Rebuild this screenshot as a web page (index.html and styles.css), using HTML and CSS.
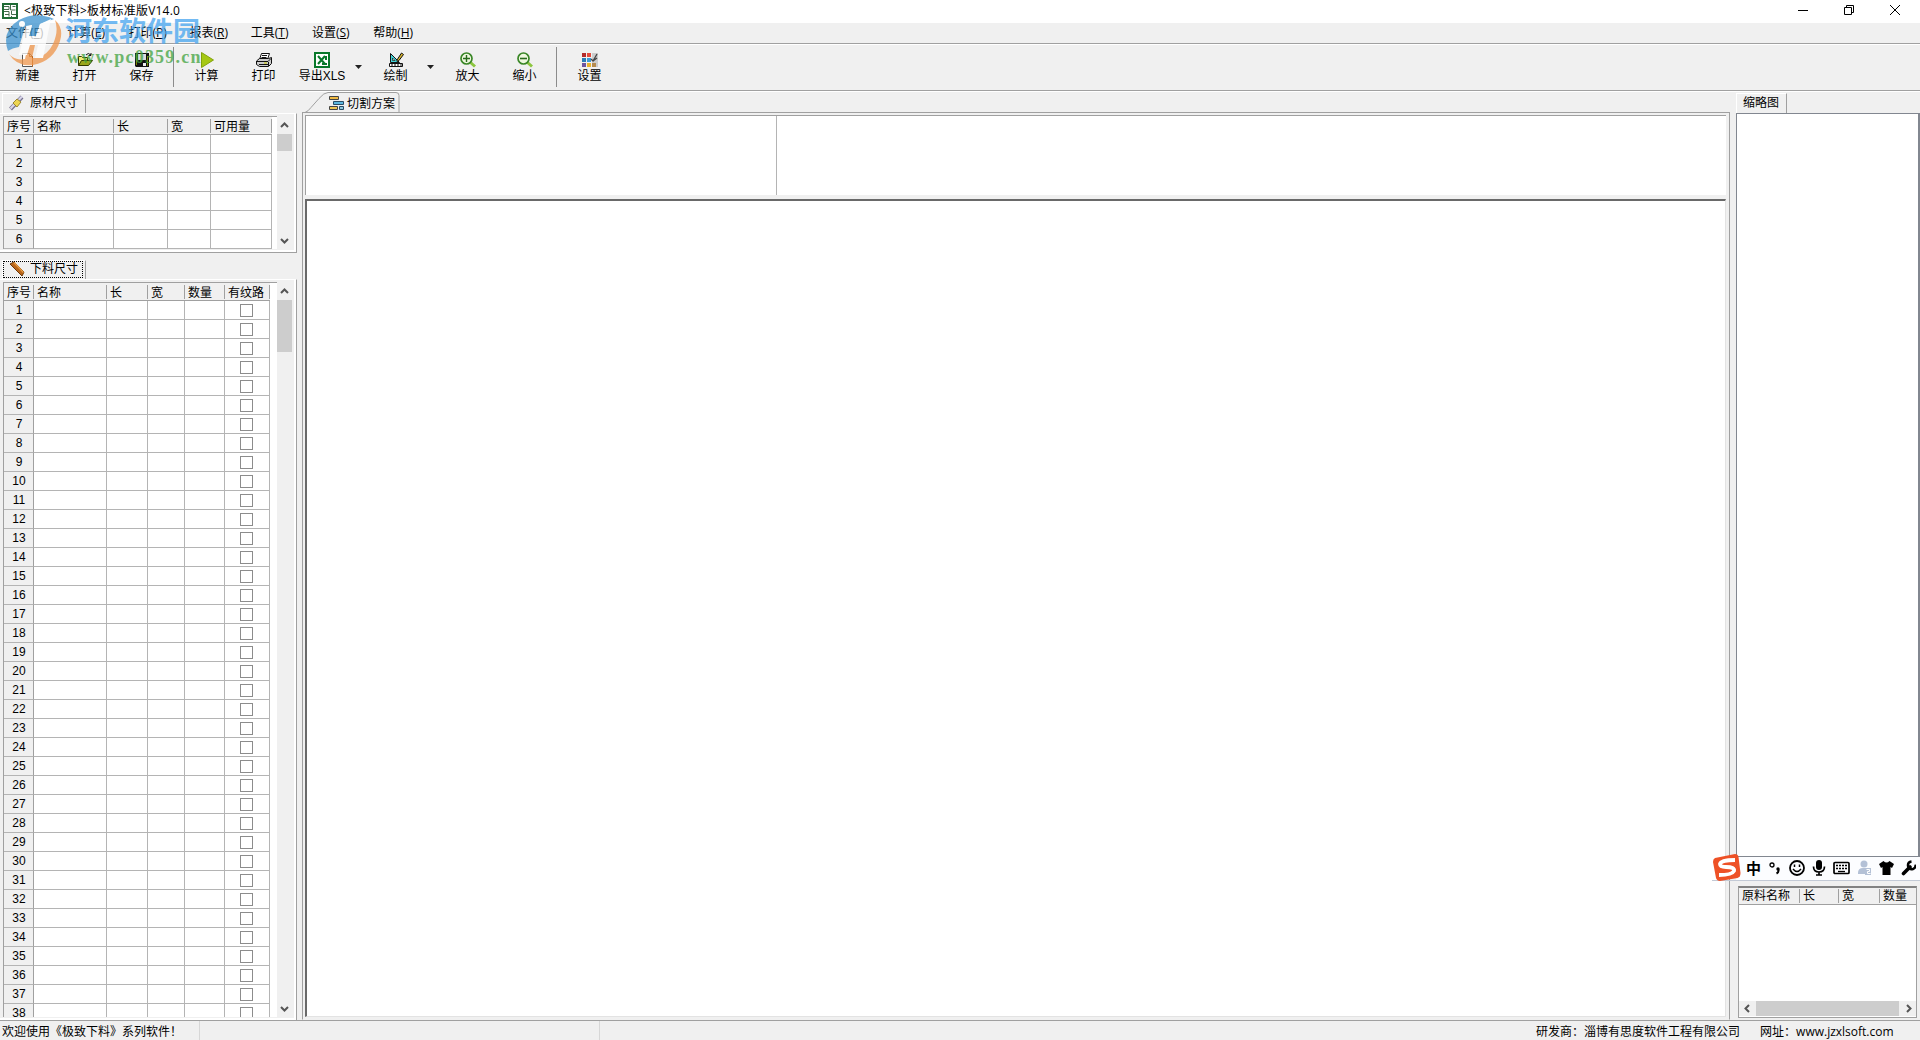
FILE: index.html
```html
<!DOCTYPE html>
<html lang="zh-CN">
<head>
    <meta charset="UTF-8">
    <title>&lt;极致下料&gt;板材标准版V14.0</title>
    <link rel="stylesheet" href="styles.css">
</head>
<body>
    <header class="titlebar">
        <svg class="app-icon" width="16" height="16" viewBox="0 0 16 16"><path fill="#fff" stroke="#1f6b35" stroke-width="2" d="M1 1h14v14H1z"/><path fill="none" stroke="#456b4c" d="M2 3.500h5v3H2M8.500 2v5h5M10.500 3.500h3M2 8.500h5v5M9.500 8v3.500H14M9.500 13v1M3 11.500h4"/></svg>
        <span class="title">&lt;极致下料&gt;板材标准版V14.0</span>
        <div class="window-buttons">
            <svg width="10" height="10"><path d="M0 5.500h10" stroke="#000"/></svg>
            <svg width="10" height="10" fill="none" stroke="#000"><path d="M.5 2.500h7v7h-7zM2.500 2.500v-2h7v7h-2"/></svg>
            <svg width="10" height="10" stroke="#000"><path d="M0 0l10 10M10 0L0 10"/></svg>
        </div>
    </header>

    <nav class="menubar">
        <span>文件(<u>F</u>)</span>
        <span>计算(<u>E</u>)</span>
        <span>打印(<u>P</u>)</span>
        <span>报表(<u>R</u>)</span>
        <span>工具(<u>T</u>)</span>
        <span>设置(<u>S</u>)</span>
        <span>帮助(<u>H</u>)</span>
    </nav>

    <div class="toolbar">
        <div class="tool">
            <svg width="16" height="16"><path d="M2.500 1.500h7l3 3v10h-10z" fill="#fff" stroke="#555"/><path d="M9.500 1.500v3h3v10" fill="none" stroke="#b55f18"/></svg>
            新建
        </div>
        <div class="tool">
            <svg width="16" height="16"><path d="M1.500 13.500v-9h3l1 1h5v3" fill="#f3ec77" stroke="#333a00"/><path d="M1.500 13.500l3-5h11l-4 5z" fill="#9aa51b" stroke="#333a00"/><path d="M9 3q2-3 5 0m0-2v2.500h-2.500" fill="none" stroke="#111"/></svg>
            打开
        </div>
        <div class="tool">
            <svg width="16" height="16"><path d="M1 1h14v14H2l-1-1z" fill="#111"/><path d="M4 2h8v6H4z" fill="#ddd"/><path d="M2 2h1v11H2zM13 4h1v10h-1z" fill="#798500"/><path d="M9 11h3v3H9z" fill="#eee"/></svg>
            保存
        </div>
        <i class="separator"></i>
        <div class="tool">
            <svg width="16" height="16"><path d="M2.500 .5l12 7.500-12 7.500z" fill="#a6c814" stroke="#82a30c"/></svg>
            计算
        </div>
        <div class="tool">
            <svg width="16" height="16"><path d="M5.500 1.500h8l-2 6h-8z" fill="#fff" stroke="#111"/><path d="M6 3.500h5M5.500 5.500h5" stroke="#111"/><path d="M.5 9l3-2.500h9l3-1v6l-3 3h-9l-3-2z" fill="#ccc" stroke="#111"/><path d="M1 9.500h11l3-3M3 12.500h9M12.500 10v4" fill="none" stroke="#111"/><path d="M8 11h3" stroke="#c7c600"/></svg>
            打印
        </div>
        <div class="tool tool-xls">
            <svg width="16" height="16"><path d="M1 1h14v14H1z" fill="#fff" stroke="#08782a" stroke-width="2"/><path d="M4 4l7 8M11 4l-7 8M12 4v4M8 12h5" stroke="#08782a" stroke-width="2"/></svg>
            导出XLS
        </div>
        <i class="dropdown"></i>
        <div class="tool">
            <svg width="16" height="16"><path d="M2.500 1.500v9h9z" fill="#42d4d8" stroke="#111"/><path d="M4.500 6v2.500h2.500z" fill="#fff" stroke="#111" stroke-width=".7"/><path d="M1.500 11.500h13v3h-13z" fill="#fff" stroke="#111"/><path d="M4 12v2M7 12v2M10 12v2M13 12v2" stroke="#111"/><path d="M9 8l4.500-7 2 1.500-4.500 6-2 1z" fill="#d8b52c" stroke="#111"/></svg>
            绘制
        </div>
        <i class="dropdown"></i>
        <div class="tool">
            <svg width="16" height="16"><path d="M10.500 10.500l4.500 4" stroke="#8cc63f" stroke-width="3"/><circle cx="6.500" cy="6.500" r="5.500" fill="#eef8df" stroke="#398626" stroke-width="1.700"/><path d="M3 6.500h7M6.500 3v7" stroke="#286b1b" stroke-width="1.400"/></svg>
            放大
        </div>
        <div class="tool">
            <svg width="16" height="16"><path d="M10.500 10.500l4.500 4" stroke="#8cc63f" stroke-width="3"/><circle cx="6.500" cy="6.500" r="5.500" fill="#eef8df" stroke="#398626" stroke-width="1.700"/><path d="M3 6.500h7" stroke="#286b1b" stroke-width="1.600"/></svg>
            缩小
        </div>
        <i class="separator"></i>
        <div class="tool">
            <svg width="16" height="16"><path d="M10 1h6v14h-6z" fill="#ccc"/><path d="M0 1h4v4H0z" fill="#b42b2b"/><path d="M5 1h4v4H5z" fill="#e44b3c"/><path d="M0 6h4v4H0z" fill="#2a7cb8"/><path d="M5 6h4v4H5z" fill="#3c9bd8"/><path d="M0 11h4v4H0z" fill="#6c55a0"/><path d="M5 11h4v4H5z" fill="#e9b32e"/><path d="M10 11h4v4h-4z" fill="#b58b4f"/><path d="M9 7l2 2 4-7M11 9l4-3" fill="none" stroke="#444" stroke-width="1.300"/></svg>
            设置
        </div>
    </div>

    <main class="workspace">
        <aside class="left">
            <div class="tab">
                <svg width="16" height="16"><path d="M1.500 14L13 2" stroke="#77728f" stroke-width="4"/><path d="M1.500 13.500L13 1.500" stroke="#d8d5ea" stroke-width="2.200"/><path d="M4 8l4-4 4 3-4 5z" fill="#edd553" stroke="#8a751b" stroke-width=".8"/></svg>
                <span>原材尺寸</span>
            </div>
            <section class="panel panel-stock">
                <div class="grid-area">
                    <table class="grid">
                        <colgroup><col style="width:30px"><col style="width:80px"><col style="width:54px"><col style="width:43px"><col style="width:61px"></colgroup>
                        <thead><tr><th>序号</th><th>名称</th><th>长</th><th>宽</th><th>可用量</th></tr></thead>
                        <tbody id="stockRows"></tbody>
                    </table>
                </div>
                <div class="scrollbar">
                    <svg width="15" height="17"><path d="M4 11l3.500-3.500L11 11" /></svg>
                    <i class="thumb"></i>
                    <svg class="down" width="15" height="17"><path d="M4 7l3.500 3.500L11 7" /></svg>
                </div>
            </section>
            <div class="tab tab-focus">
                <svg width="16" height="16"><path d="M1 3l4-2 10 10-2 4z" fill="#b9651a" stroke="#6d3908"/><path d="M5 1.500l9.500 10" stroke="#e89b42" stroke-width="1.500"/></svg>
                <span>下料尺寸</span>
            </div>
            <section class="panel panel-parts">
                <div class="grid-area">
                    <table class="grid">
                        <colgroup><col style="width:30px"><col style="width:73px"><col style="width:41px"><col style="width:37px"><col style="width:40px"><col style="width:45px"></colgroup>
                        <thead><tr><th>序号</th><th>名称</th><th>长</th><th>宽</th><th>数量</th><th>有纹路</th></tr></thead>
                        <tbody id="partRows"></tbody>
                    </table>
                </div>
                <div class="scrollbar">
                    <svg width="15" height="17"><path d="M4 11l3.500-3.500L11 11" /></svg>
                    <i class="thumb"></i>
                    <svg class="down" width="15" height="17"><path d="M4 7l3.500 3.500L11 7" /></svg>
                </div>
            </section>
        </aside>

        <section class="center">
            <div class="plan-tab">
                <svg class="plan-shape" width="100" height="21"><path d="M0 20.500h3q3-1 6-5l8-9q5-6 9-6h68q3 0 3 3v17" fill="none" stroke="#a0a0a0"/></svg>
                <svg width="15" height="15"><path d="M.5.500h9v3h-9z" fill="#f0b942" stroke="#444"/><path d="M4.500 5.500h10v3h-10z" fill="#5cb7df" stroke="#294c65"/><path d="M.5 10.500h8v3h-8z" fill="#f0c653" stroke="#444"/><path d="M10.500 10.500h4v3h-4z" fill="#8ec8de" stroke="#294c65"/></svg>
                <span>切割方案</span>
            </div>
            <div class="plan-frame">
                <div class="plan-info"><div class="info-left"></div><div class="info-right"></div></div>
                <div class="canvas"></div>
            </div>
        </section>

        <aside class="right">
            <div class="tab thumb-tab"><span>缩略图</span></div>
            <div class="thumbnail"></div>
            <div class="material">
                <div class="material-head"><span>原料名称</span><span>长</span><span>宽</span><span>数量</span></div>
                <div class="material-body"></div>
                <div class="h-scrollbar">
                    <svg width="17" height="15"><path d="M10 4L6.500 7.500 10 11"/></svg>
                    <i></i>
                    <svg width="17" height="15"><path d="M8 4l3.500 3.500L8 11"/></svg>
                </div>
            </div>
        </aside>
    </main>

    <footer class="statusbar">
        <span class="welcome">欢迎使用《极致下料》系列软件<span class="mark">！</span></span>
        <span class="blank"></span>
        <span class="vendor">研发商<span class="mark">：</span>淄博有思度软件工程有限公司</span>
        <span class="site">网址<span class="mark">：</span>www.jzxlsoft.com</span>
    </footer>

    <!-- input method bar floating over the right column -->
    <div class="ime">
        <svg class="ime-logo" width="30" height="30" viewBox="0 0 30 30"><path d="M3 5l20-4q3 0 3.500 3l2 16q0 4-3 5L8 28q-3 0-4-3L1 9q0-3 2-4z" fill="#ee5126"/><path d="M23 7Q9 7 8 11q0 3 6 3 9 0 8 4-2 4-15 4" fill="none" stroke="#fff" stroke-width="3.800"/></svg>
        <span class="ime-lang">中</span>
        <svg width="14" height="16"><circle cx="4" cy="5" r="2" fill="none" stroke="#000" stroke-width="1.300"/><path d="M10.500 9.500v1q0 2-2 3" fill="none" stroke="#000" stroke-width="2"/><circle cx="10" cy="9" r="1.700"/></svg>
        <svg width="16" height="16"><circle cx="8" cy="8" r="7" fill="none" stroke="#000" stroke-width="1.800"/><path d="M5.500 4.500v2.500M10.500 4.500v2.500" stroke="#000" stroke-width="1.500"/><path d="M4 9q4 5 8 0" fill="none" stroke="#000" stroke-width="1.400"/></svg>
        <svg width="14" height="16"><rect x="4" y="0" width="6" height="10" rx="3"/><path d="M1.500 6.500q0 5.500 5.500 5.500t5.500-5.500M7 12v3M4 15h6" fill="none" stroke="#000" stroke-width="1.700"/></svg>
        <svg width="17" height="16"><rect x="1" y="2.500" width="15" height="11" rx="1" fill="none" stroke="#000" stroke-width="1.700"/><path d="M3 5.500h11M3 8.500h11" stroke="#000" stroke-width="1.600" stroke-dasharray="2 1"/><path d="M5 11.500h7" stroke="#000" stroke-width="1.300"/></svg>
        <svg width="15" height="16"><g fill="#b4c1d6"><circle cx="7" cy="4" r="3.500"/><path d="M1 13q0-5 5-5h3l-1 6H1z"/><path d="M8 8h6v7H8z"/></g><path d="M9.500 9.500h3v2h-2v2h3" fill="none" stroke="#fff"/></svg>
        <svg width="15" height="16"><path d="M4.500 1q3 3 6 0L15 4l-2 4-1.500-1v8h-8V7L2 8 0 4z"/></svg>
        <svg width="15" height="16"><path d="M2.500 13.500L9 7" stroke="#000" stroke-width="3.600" stroke-linecap="round"/><path d="M10.500 1.500Q6.500 2 7 6t5 3q3-1 2.500-4.500" fill="none" stroke="#000" stroke-width="2.400"/></svg>
    </div>

    <div class="watermark">
        <svg width="58" height="52" viewBox="0 0 58 52"><path d="M3 37Q-4 17 14 6 30-3 49 5l-8 3-6 2-4 12h-7l3-11-7 2-6 20q-7 1-11 4z" fill="#3b92cf"/><path d="M50 6q9 8 5 21-6 20-27 24Q12 53 4 40q6 7 16 5l3-14h7l-3 13h6q10-4 15-14 6-13 2-24z" fill="#ee954a"/><circle cx="17" cy="10" r="3" fill="#fff"/><path d="M21 12l6-1-3 11h7l4-12 11-5-8 39h-8l3-13h-8l-3 10h-8z" fill="#fff"/></svg>
        <div>
            <div class="wm-name">河东软件园</div>
            <div class="wm-url">www.pc0359.cn</div>
        </div>
    </div>

    <script>
        function fillRows(id, count, blanks, withCheck) {
            let html = '';
            for (let i = 1; i <= count; i++) {
                html += '<tr><td>' + i + '</td>' + '<td></td>'.repeat(blanks);
                if (withCheck) html += '<td><i class="check"></i></td>';
                html += '</tr>';
            }
            document.getElementById(id).innerHTML = html;
        }

        fillRows('stockRows', 6, 4, false);
        fillRows('partRows', 38, 4, true);
    </script>
</body>
</html>
```
FILE: styles.css
```css
* {
    box-sizing: border-box;
}

body {
    display: flex;
    flex-direction: column;
    width: 1920px;
    height: 1040px;
    margin: 0;
    overflow: hidden;
    position: relative;
    background: #f0f0f0;
    color: #000;
    font: 12px/16px "Liberation Sans", "Noto Sans CJK SC", sans-serif;
    white-space: nowrap;
}

svg {
    display: block;
    flex: none;
}

/* title and menu */
.titlebar {
    display: flex;
    height: 23px;
    padding: 3px 20px 0 2px;
    background: #fff;
}

.title {
    margin: 0 0 0 6px;
    font-family: "Open Sans", "Noto Sans CJK SC", sans-serif;
    letter-spacing: .22px;
}

.window-buttons {
    display: flex;
    gap: 36px;
    margin-left: auto;
    padding-top: 2px;
}

.menubar {
    display: flex;
    height: 22px;
    padding: 2px 0 0 6px;
    border-bottom: 1px solid #fff;
    box-shadow: inset 0 -1px #a0a0a0;
    font-family: "Open Sans", "Noto Sans CJK SC", sans-serif;
}

.menubar span {
    width: 61.2px;
}

/* toolbar */
.toolbar {
    display: flex;
    height: 47px;
    border-bottom: 1px solid #fff;
    box-shadow: inset 0 -1px #a0a0a0;
}

.tool {
    display: flex;
    flex-direction: column;
    align-items: center;
    width: 57px;
    padding-top: 7px;
}

.tool:first-child {
    margin-left: -1px;
}

.tool-xls {
    width: 60px;
}

.separator {
    width: 1px;
    height: 40px;
    margin: 2px 4px 0 3px;
    background: #8c8c8c;
}

.dropdown {
    width: 15px;
    padding: 20px 0 0 3px;
}

.dropdown::before {
    content: "";
    display: block;
    width: 7px;
    height: 4px;
    background: #222;
    clip-path: polygon(0 0, 100% 0, 50% 100%);
}

/* columns */
.workspace {
    display: flex;
    height: 928px;
}

.left {
    width: 297px;
}

.tab {
    display: flex;
    gap: 5px;
    width: 84px;
    height: 20px;
    margin: 1px 0 0 2px;
    padding: 1px 0 0 6px;
    border-top: 1px solid #fff;
    border-left: 1px solid #fff;
    border-right: 1px solid #a0a0a0;
}

.panel {
    display: flex;
    justify-content: space-between;
    padding: 2px 4px 0 3px;
    border-right: 1px solid #a0a0a0;
    border-bottom: 1px solid #a0a0a0;
    border-top: 1px solid #fff;
    box-shadow: inset -2px -2px #fff;
}

.panel-stock {
    height: 140px;
}

.tab-focus {
    height: 19px;
    margin-top: 7px;
    padding-top: 0;
    position: relative;
}

.tab-focus::after {
    content: "";
    position: absolute;
    inset: 0 2px 1px 0;
    border: 1px dotted #000;
}

.panel-parts {
    height: 741px;
    border-bottom: 0;
}

.grid-area {
    flex: 1;
    height: 133px;
    overflow: hidden;
    border-top: 1px solid #a0a0a0;
    border-left: 1px solid #a0a0a0;
    background: #fff;
}

.panel-parts .grid-area {
    height: 735px;
}

.grid {
    width: 0;
    border-spacing: 0;
    table-layout: fixed;
}

.grid th {
    height: 18px;
    padding: 3px 0 0 3px;
    border-bottom: 1px solid #a0a0a0;
    background: linear-gradient(#a0a0a0, #a0a0a0) right 2px / 1px 14px no-repeat #f0f0f0;
    font-weight: normal;
    text-align: left;
    line-height: 14px;
}

.grid td {
    height: 19px;
    padding: 0;
    border-right: 1px solid #b4b4b4;
    border-bottom: 1px solid #b4b4b4;
    line-height: 18px;
}

.grid td:first-child {
    padding-left: 1px;
    background: #f0f0f0;
    text-align: center;
    border-right-color: #a0a0a0;
}

.check {
    display: block;
    width: 13px;
    height: 13px;
    margin-left: 15px;
    border: 1px solid #8c8c8c;
    background: #fff;
}

.scrollbar {
    display: flex;
    flex-direction: column;
    width: 15px;
    height: 133px;
    background: #f0f0f0;
}

.scrollbar svg,
.h-scrollbar svg {
    fill: none;
    stroke: #555;
    stroke-width: 2;
}

.scrollbar .thumb {
    height: 17px;
    margin-top: 1px;
    background: #cdcdcd;
}

.scrollbar .down {
    margin-top: auto;
}

.panel-parts .scrollbar {
    height: 735px;
}

.panel-parts .thumb {
    height: 52px;
}

/* cutting plan */
.center {
    width: 1428px;
    margin-left: 5px;
}

.plan-tab {
    display: flex;
    gap: 3px;
    height: 20px;
    padding: 4px 0 0 27px;
    position: relative;
}

.plan-shape {
    position: absolute;
    left: 0;
    top: 0;
    z-index: 1;
}

.plan-frame {
    height: 908px;
    padding: 2px 3px 3px 2px;
    border: 1px solid #a0a0a0;
    border-bottom-color: #f0f0f0;
}

.plan-info {
    display: flex;
    height: 80px;
    border-top: 1px solid #a0a0a0;
    border-left: 1px solid #a0a0a0;
    background: #fff;
}

.info-left {
    width: 471px;
    border-right: 1px solid #b4b4b4;
}

.canvas {
    height: 818px;
    margin-top: 4px;
    border-top: 2px solid #696969;
    border-left: 2px solid #696969;
    border-right: 1px solid #e3e3e3;
    border-bottom: 1px solid #e3e3e3;
    background: #fff;
}

/* right column */
.right {
    width: 184px;
    margin-left: 6px;
}

.thumb-tab {
    width: 51px;
    margin-left: 0;
}

.thumbnail {
    height: 744px;
    border: 1px solid #828790;
    border-right-width: 2px;
    background: #fff;
}

.material {
    display: flex;
    flex-direction: column;
    width: 179px;
    height: 132px;
    margin: 29px 0 0 2px;
    border: 1px solid #a0a0a0;
    border-top: 2px solid #828282;
    background: #fff;
}

.material-head {
    display: flex;
    height: 17px;
    border-bottom: 1px solid #a0a0a0;
    background: #f0f0f0;
}

.material-head span {
    width: 41px;
    height: 14px;
    margin-top: 1px;
    padding-left: 3px;
    border-right: 1px solid #a0a0a0;
    line-height: 14px;
}

.material-head span:first-child {
    width: 61px;
}

.material-head span:nth-child(2) {
    width: 39px;
}

.material-head span:last-child {
    border: 0;
    width: 36px;
}

.material-body {
    flex: 1;
}

.h-scrollbar {
    display: flex;
    height: 15px;
    margin-bottom: 1px;
    background: #f0f0f0;
}

.h-scrollbar i {
    flex: 1;
    background: #cdcdcd;
}

/* status */
.statusbar {
    display: flex;
    height: 20px;
    padding-left: 2px;
    border-top: 1px solid #a0a0a0;
    font-family: "Open Sans", "Noto Sans CJK SC", sans-serif;
    line-height: 20px;
}

/* full-width punctuation centred in its box */
.mark {
    font-family: "Noto Sans CJK TC", sans-serif;
}

.welcome {
    width: 198px;
    border-right: 1px solid #d7d7d7;
}

.blank {
    width: 400px;
    border-right: 1px solid #d7d7d7;
}

.vendor {
    margin-left: 936px;
}

.site {
    margin-left: 20px;
}

.ime {
    display: flex;
    align-items: center;
    gap: 7px;
    position: absolute;
    left: 1712px;
    top: 857px;
    width: 208px;
    height: 24px;
    background: linear-gradient(90deg, transparent 24px, #fcfdff 24px);
    border-bottom: 1px solid #c3cad6;
}

.ime svg,
.ime-lang {
    position: relative;
    top: -1px;
}

.ime-logo {
    margin-right: -3px;
}

.ime-lang {
    font: bold 15px/20px "Noto Sans CJK SC", sans-serif;
}

.watermark {
    display: flex;
    position: absolute;
    left: 5px;
    top: 14px;
    opacity: .75;
}

.watermark > div {
    margin-left: 2px;
}

.wm-name {
    color: #45a4ef;
    font: bold 27px/32px "Noto Sans CJK SC", sans-serif;
}

.wm-url {
    margin-left: 2px;
    color: #42a33f;
    font: bold 18px/22px "Liberation Serif", serif;
    letter-spacing: 1.2px;
}
```
